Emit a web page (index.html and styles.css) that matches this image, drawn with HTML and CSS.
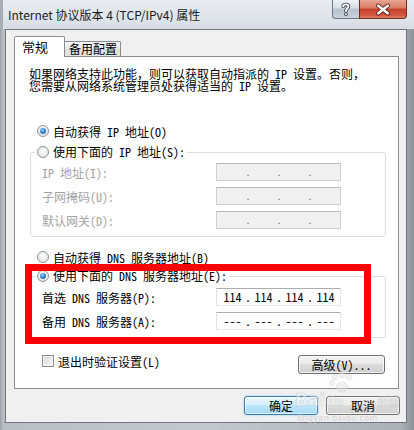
FILE: index.html
```html
<!DOCTYPE html>
<html lang="zh-CN">
<head>
<meta charset="utf-8">
<title>Internet 协议版本 4 (TCP/IPv4) 属性</title>
<link rel="stylesheet" href="styles.css">
</head>
<body>
<div class="window">
  <div class="titlebar">
    <span class="title">Internet 协议版本 4 (TCP/IPv4) 属性</span>
    <div class="caption">
      <div class="cap-help">
        <svg width="27" height="19" viewBox="0 0 27 19">
          <path d="M10.6 6.2 C10.8 3.6 16 3.4 16 6.4 C16 8.4 13.4 8.6 13.4 11" fill="none" stroke="#2d3640" stroke-width="3.6" stroke-linecap="round"/>
          <circle cx="13.4" cy="14.4" r="1.9" fill="#2d3640"/>
          <path d="M10.6 6.2 C10.8 3.6 16 3.4 16 6.4 C16 8.4 13.4 8.6 13.4 11" fill="none" stroke="#fff" stroke-width="2" stroke-linecap="round"/>
          <circle cx="13.4" cy="14.4" r="1.1" fill="#fff"/>
        </svg>
      </div>
      <div class="cap-close">
        <svg width="48" height="19" viewBox="0 0 48 19">
          <path d="M19 5.5 L29 13.5 M29 5.5 L19 13.5" stroke="#5a1c14" stroke-width="4.4" stroke-linecap="round"/>
          <path d="M19 5.5 L29 13.5 M29 5.5 L19 13.5" stroke="#fff" stroke-width="2.6" stroke-linecap="round"/>
        </svg>
      </div>
    </div>
  </div>
  <div class="client">
    <div class="tabs">
      <div class="tab active">常规</div>
      <div class="tab">备用配置</div>
    </div>
    <div class="panel">
      <p class="desc">如果网络支持此功能，则可以获取自动指派的 IP 设置。否则，<br>您需要从网络系统管理员处获得适当的 IP 设置。</p>

      <div class="opt r1"><span class="radio checked"></span><span>自动获得 IP 地址(O)</span></div>

      <fieldset class="group g1">
        <legend><span class="opt-in"><span class="radio"></span><span>使用下面的 IP 地址(S):</span></span></legend>
        <div class="row first off"><span class="lbl">IP 地址(I):</span>
          <div class="ip dis"><span class="oct"></span><span class="dot">.</span><span class="oct"></span><span class="dot">.</span><span class="oct"></span><span class="dot">.</span><span class="oct"></span></div>
        </div>
        <div class="row off"><span class="lbl">子网掩码(U):</span>
          <div class="ip dis"><span class="oct"></span><span class="dot">.</span><span class="oct"></span><span class="dot">.</span><span class="oct"></span><span class="dot">.</span><span class="oct"></span></div>
        </div>
        <div class="row off"><span class="lbl">默认网关(D):</span>
          <div class="ip dis"><span class="oct"></span><span class="dot">.</span><span class="oct"></span><span class="dot">.</span><span class="oct"></span><span class="dot">.</span><span class="oct"></span></div>
        </div>
      </fieldset>

      <div class="opt r3"><span class="radio"></span><span>自动获得 DNS 服务器地址(B)</span></div>

      <fieldset class="group g2">
        <legend><span class="opt-in"><span class="radio checked"></span><span>使用下面的 DNS 服务器地址(E):</span></span></legend>
        <div class="row first2"><span class="lbl">首选 DNS 服务器(P):</span>
          <div class="ip"><span class="oct">114</span><span class="dot">.</span><span class="oct">114</span><span class="dot">.</span><span class="oct">114</span><span class="dot">.</span><span class="oct">114</span></div>
        </div>
        <div class="row"><span class="lbl">备用 DNS 服务器(A):</span>
          <div class="ip"><span class="oct dash">---</span><span class="dot">.</span><span class="oct dash">---</span><span class="dot">.</span><span class="oct dash">---</span><span class="dot">.</span><span class="oct dash">---</span></div>
        </div>
      </fieldset>

      <div class="bottom-row">
        <div class="check"><span class="checkbox"></span><span>退出时验证设置(L)</span></div>
        <button class="btn adv">高级(V)...</button>
      </div>
    </div>
    <div class="dlg-btns">
      <button class="btn ok">确定</button>
      <button class="btn cancel">取消</button>
    </div>
  </div>

  <div class="highlight"></div>

  <div class="watermark">
    <svg class="paw" width="30" height="22" viewBox="0 0 30 22">
      <circle cx="8" cy="5" r="3" />
      <circle cx="15" cy="3" r="3" />
      <circle cx="22" cy="5" r="3" />
      <circle cx="5" cy="11" r="2.6" />
      <ellipse cx="15" cy="15" rx="6" ry="5" />
    </svg>
    <div class="wm-line"><span class="wm-bai">Bai</span><span class="wm-du">du</span><span class="wm-jy">经验</span></div>
  </div>
  <div class="wm-url">jingyan.baidu.com</div>
</div>
</body>
</html>
```

FILE: styles.css
```css
* { box-sizing: border-box; }

body {
  margin: 0;
  background: #ffffff;
}

.window {
  position: relative;
  width: 414px;
  height: 430px;
  overflow: hidden;
  display: flex;
  flex-direction: column;
  background: linear-gradient(90deg, #9aa0a6 0px, #b9bec3 3px, #c4c9ce 50%, #aab0b6 97%, #8c9298 100%);
  font-family: "Noto Sans Mono CJK SC", "Noto Sans CJK SC", sans-serif;
  font-size: 12px;
  color: #000;
}

/* ---------- title bar ---------- */
.titlebar {
  height: 29px;
  flex: none;
  display: flex;
  align-items: flex-start;
  background: linear-gradient(180deg, #e7ebef 0%, #e0e5ea 60%, #d6dce2 100%);
  border-left: 3px solid #a7adb3;
}

.title {
  margin: 6px 0 0 5px;
  font-family: "Noto Sans CJK SC", "Noto Sans", sans-serif;
  font-size: 12px;
  line-height: 18px;
  color: #1a1a1a;
  white-space: nowrap;
}

.caption {
  margin-left: auto;
  margin-right: 7px;
  display: flex;
  height: 19px;
}

.cap-help {
  width: 27px;
  height: 19px;
  border: 1px solid #6d7884;
  border-top: none;
  border-right: none;
  border-radius: 0 0 0 4px;
  background: linear-gradient(180deg, #eef2f6 0%, #d6dde4 45%, #b9c3cd 50%, #c9d2da 100%);
  display: flex;
  align-items: center;
  justify-content: center;
}

.cap-close {
  width: 48px;
  height: 19px;
  border: 1px solid #6b2a22;
  border-top: none;
  border-radius: 0 0 4px 0;
  background: linear-gradient(180deg, #e9a593 0%, #d97a64 45%, #c2412b 50%, #d0583e 85%, #e0866a 100%);
  display: flex;
  align-items: center;
  justify-content: center;
}

.cap-help svg, .cap-close svg { display: block; }

/* ---------- client ---------- */
.client {
  flex: 1;
  margin: 0 7px 7px 5px;
  border: 1px solid #6f767d;
  background: #f0f0f0;
  padding: 6px 7px 0 8px;
  display: flex;
  flex-direction: column;
}

.tabs {
  height: 20px;
  display: flex;
  align-items: flex-start;
  position: relative;
  z-index: 2;
  flex: none;
}

.tab {
  font-size: 12px;
  line-height: 14px;
  white-space: nowrap;
}

.tab.active {
  width: 51px;
  height: 21px;
  padding: 3px 0 0 7px;
  font-size: 13px;
  background: #ffffff;
  border: 1px solid #898c95;
  border-bottom: none;
  border-radius: 2px 2px 0 0;
}

.tab:not(.active) {
  margin-top: 5px;
  width: 56px;
  height: 15px;
  padding: 0 0 0 4px;
  border: 1px solid #898c95;
  border-left: none;
  border-bottom: none;
  border-radius: 0 2px 0 0;
  background: linear-gradient(180deg, #f4f4f4 0%, #ebebeb 50%, #dedede 51%, #e6e6e6 100%);
}

.panel {
  height: 333px;
  flex: none;
  background: #ffffff;
  border: 1px solid #898c95;
}

.desc {
  margin: 11px 0 0 14px;
  line-height: 12px;
  white-space: nowrap;
}

.opt {
  display: flex;
  align-items: center;
  gap: 4px;
  height: 16px;
  margin-left: 22px;
  white-space: nowrap;
}

.opt.r1 { margin-top: 31px; }
.opt.r3 { margin-top: 12px; }

.opt-in {
  display: inline-flex;
  align-items: center;
  gap: 4px;
  height: 20px;
  white-space: nowrap;
}

.radio {
  width: 12px;
  height: 12px;
  flex: none;
  border-radius: 50%;
  border: 1px solid #8f959b;
  background: radial-gradient(circle at 50% 40%, #fdfdfd 0%, #ececec 55%, #d4d7da 100%);
  position: relative;
}

.radio.checked::after {
  content: "";
  position: absolute;
  left: 2px;
  top: 2px;
  width: 6px;
  height: 6px;
  border-radius: 50%;
  background: radial-gradient(circle at 40% 35%, #9fd3f7 0%, #2d7cc4 55%, #145a9c 100%);
}

.group {
  margin: 3px 0 0 15px;
  width: 356px;
  border: 1px solid #d5dfe5;
  border-radius: 3px;
  padding: 0 0 7px 0;
  min-width: 0;
}

.group.g2 { margin-top: 1px; }

.group legend {
  margin-left: 4px;
  padding: 0 2px;
  height: 20px;
  line-height: 20px;
}

.row {
  display: flex;
  align-items: center;
  height: 18px;
  margin: 6px 0 0 11px;
  white-space: nowrap;
}

.row.first { margin-top: 1px; }
.row.first2 { margin-top: 2px; }

.row.off .lbl { color: #a3a3a3; }

.lbl { width: 174px; flex: none; }

.ip {
  width: 125px;
  height: 18px;
  flex: none;
  display: flex;
  align-items: center;
  padding-left: 4px;
  background: #ffffff;
  border: 1px solid #e3e9ef;
  border-top-color: #abadb3;
  border-left-color: #e2e3ea;
}

.ip.dis {
  background: #f0f0f0;
  border-color: #cfcfcf;
  border-top-color: #b7b7b7;
  color: #6d6d6d;
}

.oct {
  width: 23px;
  text-align: center;
  line-height: 16px;
}

.dot {
  width: 8px;
  text-align: center;
  line-height: 16px;
}

.ip.dis .dot { font-size: 10px; }

.bottom-row {
  display: flex;
  justify-content: space-between;
  align-items: flex-start;
  margin: 17px 13px 0 27px;
}

.check {
  display: flex;
  align-items: center;
  gap: 4px;
  height: 12px;
  white-space: nowrap;
}

.checkbox {
  width: 12px;
  height: 12px;
  flex: none;
  border: 1px solid #8f8f8f;
  background: linear-gradient(135deg, #d6d6d6 0%, #ececec 60%, #f9f9f9 100%);
  box-shadow: inset 0 0 0 1px #f4f4f4;
}

.btn {
  height: 19px;
  padding: 0;
  border: 1px solid #707070;
  border-radius: 3px;
  background: linear-gradient(180deg, #f2f2f2 0%, #ebebeb 45%, #dddddd 50%, #cfcfcf 100%);
  box-shadow: inset 0 0 0 1px rgba(255, 255, 255, 0.75);
  font-family: "Noto Sans Mono CJK SC", "Noto Sans CJK SC", sans-serif;
  font-size: 12px;
  line-height: 16px;
  color: #000;
}

.btn.adv { width: 87px; }

.dlg-btns {
  display: flex;
  justify-content: flex-end;
  gap: 8px;
  margin: 7px -1px 0 0;
}

.btn.ok, .btn.cancel { width: 74px; }

.btn.ok {
  border-color: #3c7fb1;
  background: linear-gradient(180deg, #eaf6fd 0%, #d9f0fc 45%, #bee6fd 50%, #a7d9f5 100%);
  box-shadow: inset 0 0 0 1px rgba(255, 255, 255, 0.6), 0 0 2px #7ec4ea;
}

/* ---------- overlays ---------- */
.highlight {
  position: absolute;
  left: 25px;
  top: 264px;
  width: 346px;
  height: 80px;
  border: 7px solid #ff0000;
  pointer-events: none;
}

.watermark {
  position: absolute;
  left: 290px;
  top: 372px;
  width: 120px;
  pointer-events: none;
  opacity: 0.5;
}

.paw {
  display: block;
  margin-left: 37px;
  fill: #e2e2e2;
  stroke: #c4c4c4;
  stroke-width: 0.6;
}

.wm-line {
  display: flex;
  align-items: baseline;
  gap: 1px;
  margin-top: -2px;
  line-height: 17px;
  color: #f6f6f6;
  -webkit-text-stroke: 0.6px #bcbcbc;
  font-family: "DejaVu Sans", "Noto Sans CJK SC", sans-serif;
  font-weight: bold;
}

.wm-bai { font-size: 17px; margin-left: 5px; }
.wm-du { font-size: 12px; }
.wm-jy { font-size: 11px; margin-left: 33px; font-family: "Noto Sans CJK SC", sans-serif; }

.wm-url {
  position: absolute;
  left: 297px;
  top: 414px;
  font-family: "DejaVu Sans", sans-serif;
  font-size: 8px;
  line-height: 9px;
  color: #c8c8c8;
  letter-spacing: 0.4px;
  opacity: 0.7;
  pointer-events: none;
}
```
